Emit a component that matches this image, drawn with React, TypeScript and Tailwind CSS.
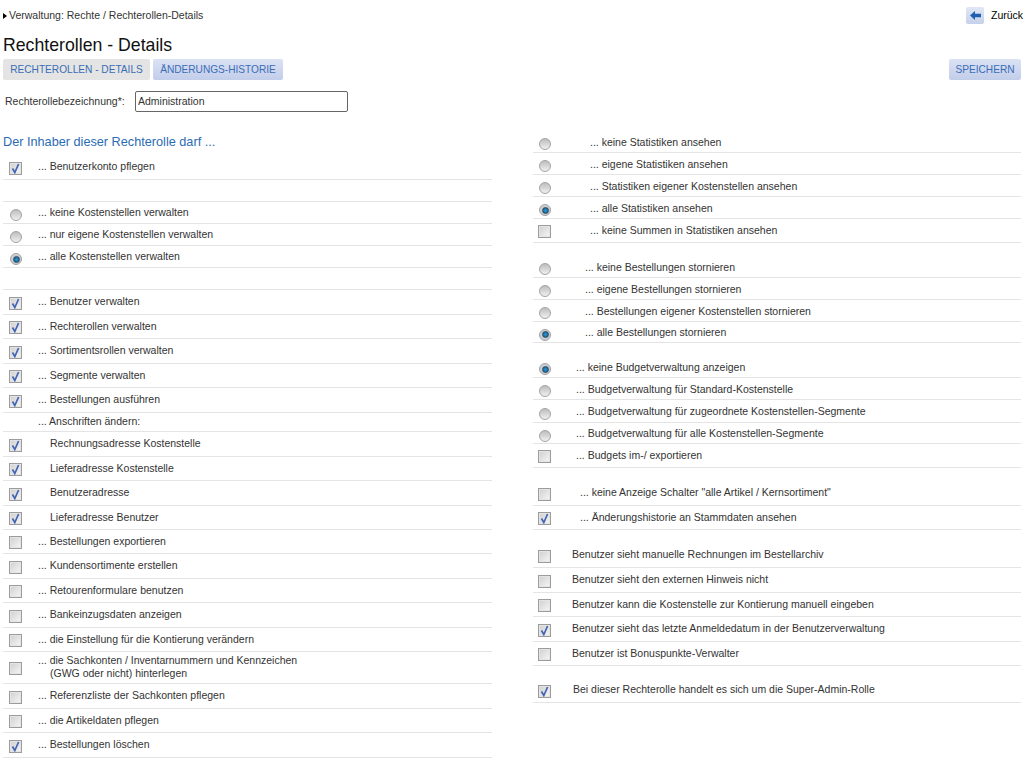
type RowDef = {
  kind: 'check' | 'radio' | 'none' | 'gap';
  label?: React.ReactNode;
  on?: boolean;
  h: number;
  indent?: number;
};

const leftRows: RowDef[] = [
  { kind: 'check', label: '... Benutzerkonto pflegen', on: true, h: 25 },
  { kind: 'none', h: 22 },
  { kind: 'radio', label: '... keine Kostenstellen verwalten', h: 22 },
  { kind: 'radio', label: '... nur eigene Kostenstellen verwalten', h: 22 },
  { kind: 'radio', label: '... alle Kostenstellen verwalten', on: true, h: 22 },
  { kind: 'none', h: 22 },
  { kind: 'check', label: '... Benutzer verwalten', on: true, h: 25 },
  { kind: 'check', label: '... Rechterollen verwalten', on: true, h: 24 },
  { kind: 'check', label: '... Sortimentsrollen verwalten', on: true, h: 25 },
  { kind: 'check', label: '... Segmente verwalten', on: true, h: 24 },
  { kind: 'check', label: '... Bestellungen ausführen', on: true, h: 25 },
  { kind: 'none', label: '... Anschriften ändern:', h: 19 },
  { kind: 'check', label: 'Rechnungsadresse Kostenstelle', on: true, h: 25, indent: 47 },
  { kind: 'check', label: 'Lieferadresse Kostenstelle', on: true, h: 24, indent: 47 },
  { kind: 'check', label: 'Benutzeradresse', on: true, h: 25, indent: 47 },
  { kind: 'check', label: 'Lieferadresse Benutzer', on: true, h: 24, indent: 47 },
  { kind: 'check', label: '... Bestellungen exportieren', h: 24 },
  { kind: 'check', label: '... Kundensortimente erstellen', h: 25 },
  { kind: 'check', label: '... Retourenformulare benutzen', h: 24 },
  { kind: 'check', label: '... Bankeinzugsdaten anzeigen', h: 25 },
  { kind: 'check', label: '... die Einstellung für die Kontierung verändern', h: 24 },
  {
    kind: 'check',
    label: (
      <>
        ... die Sachkonten / Inventarnummern und Kennzeichen
        <br />
        <span className="pl-[12px]">(GWG oder nicht) hinterlegen</span>
      </>
    ),
    h: 32,
  },
  { kind: 'check', label: '... Referenzliste der Sachkonten pflegen', h: 25 },
  { kind: 'check', label: '... die Artikeldaten pflegen', h: 24 },
  { kind: 'check', label: '... Bestellungen löschen', on: true, h: 25 },
];

const rightRows: RowDef[] = [
  { kind: 'radio', label: '... keine Statistiken ansehen', h: 22, indent: 57 },
  { kind: 'radio', label: '... eigene Statistiken ansehen', h: 22, indent: 57 },
  { kind: 'radio', label: '... Statistiken eigener Kostenstellen ansehen', h: 22, indent: 57 },
  { kind: 'radio', label: '... alle Statistiken ansehen', on: true, h: 22, indent: 57 },
  { kind: 'check', label: '... keine Summen in Statistiken ansehen', h: 24, indent: 57 },
  { kind: 'gap', h: 13 },
  { kind: 'radio', label: '... keine Bestellungen stornieren', h: 22, indent: 52 },
  { kind: 'radio', label: '... eigene Bestellungen stornieren', h: 22, indent: 52 },
  { kind: 'radio', label: '... Bestellungen eigener Kostenstellen stornieren', h: 22, indent: 52 },
  { kind: 'radio', label: '... alle Bestellungen stornieren', on: true, h: 21, indent: 52 },
  { kind: 'gap', h: 13 },
  { kind: 'radio', label: '... keine Budgetverwaltung anzeigen', on: true, h: 22, indent: 43 },
  { kind: 'radio', label: '... Budgetverwaltung für Standard-Kostenstelle', h: 22, indent: 43 },
  { kind: 'radio', label: '... Budgetverwaltung für zugeordnete Kostenstellen-Segmente', h: 23, indent: 43 },
  { kind: 'radio', label: '... Budgetverwaltung für alle Kostenstellen-Segmente', h: 21, indent: 43 },
  { kind: 'check', label: '... Budgets im-/ exportieren', h: 24, indent: 43 },
  { kind: 'gap', h: 13 },
  { kind: 'check', label: '... keine Anzeige Schalter "alle Artikel / Kernsortiment"', h: 25, indent: 47 },
  { kind: 'check', label: '... Änderungshistorie an Stammdaten ansehen', on: true, h: 24, indent: 47 },
  { kind: 'gap', h: 13 },
  { kind: 'check', label: 'Benutzer sieht manuelle Rechnungen im Bestellarchiv', h: 25, indent: 39 },
  { kind: 'check', label: 'Benutzer sieht den externen Hinweis nicht', h: 25, indent: 39 },
  { kind: 'check', label: 'Benutzer kann die Kostenstelle zur Kontierung manuell eingeben', h: 24, indent: 39 },
  { kind: 'check', label: 'Benutzer sieht das letzte Anmeldedatum in der Benutzerverwaltung', on: true, h: 25, indent: 39 },
  { kind: 'check', label: 'Benutzer ist Bonuspunkte-Verwalter', h: 24, indent: 39 },
  { kind: 'gap', h: 12 },
  { kind: 'check', label: 'Bei dieser Rechterolle handelt es sich um die Super-Admin-Rolle', on: true, h: 25, indent: 40 },
];

function CheckBox({ on }: { on?: boolean }) {
  return (
    <span className="flex h-[13px] w-[13px] shrink-0 items-center justify-center border border-[#9c9c9c] bg-gradient-to-br from-[#cfcfcf] to-[#f7f7f7] shadow-[inset_0_0_0_1px_#e4e4e4]">
      {on && (
        <svg width="11" height="11" viewBox="0 0 11 11" fill="none">
          <path d="M2.5 5.5 L4.8 9.5 L8.6 1" stroke="#4264b4" strokeWidth="1.7" />
        </svg>
      )}
    </span>
  );
}

function Radio({ on }: { on?: boolean }) {
  return (
    <span
      className={`flex h-[12px] w-[12px] shrink-0 items-center justify-center rounded-full border border-[#a3a3a3] ${
        on ? 'bg-[#c9ced4]' : 'bg-gradient-to-b from-[#bdbdbd] to-[#f0f0f0]'
      }`}
    >
      {on && <span className="h-[7px] w-[7px] rounded-full border border-[#3b4a5a] bg-[radial-gradient(circle,#2f9ad6_0%,#0c5f96_80%)]" />}
    </span>
  );
}

function Row({ row, checkPad, radioPad, radioLow }: { row: RowDef; checkPad: number; radioPad: number; radioLow?: boolean }) {
  if (row.kind === 'gap') return <div style={{ height: row.h }} />;
  const low = radioLow && row.kind === 'radio';
  return (
    <div className="relative flex border-b border-[#e4e4e4]" style={{ height: row.h }}>
      {row.kind === 'check' && (
        <div className="flex items-center pt-[2px]" style={{ paddingLeft: checkPad }}>
          <CheckBox on={row.on} />
        </div>
      )}
      {row.kind === 'radio' && (
        <div className="flex items-center pt-[5px]" style={{ paddingLeft: radioPad }}>
          <Radio on={row.on} />
        </div>
      )}
      {row.label && (
        <div
          className={`absolute top-0 flex h-full items-center whitespace-nowrap leading-[13px] ${low ? 'pt-[1px]' : 'pb-[1px]'}`}
          style={{ left: row.indent ?? 35 }}
        >
          <div>{row.label}</div>
        </div>
      )}
    </div>
  );
}

export default function App() {
  return (
    <div className="h-[758px] w-[1024px] overflow-hidden bg-white font-['Liberation_Sans',Arial,sans-serif] text-[10.5px] text-[#333]">
      {/* Kopfzeile */}
      <div className="flex h-[33px] items-start justify-between pl-[3px] pt-[7px]">
        <div className="flex h-[17px] items-center gap-[2px]">
          <span className="h-0 w-0 border-y-[3px] border-l-[4px] border-y-transparent border-l-black" />
          <span>Verwaltung: Rechte / Rechterollen-Details</span>
        </div>
        <div className="flex items-center">
          <span className="flex h-[17px] w-[18px] items-center justify-center rounded-[2px] bg-gradient-to-b from-[#e2e7f4] to-[#c5d0ea]">
            <svg width="11" height="9" viewBox="0 0 11 9">
              <path d="M0 4.5 L5 0 L5 2.8 L11 2.8 L11 6.2 L5 6.2 L5 9 Z" fill="#1f5fb0" />
            </svg>
          </span>
          <span className="ml-[7px] w-[33px] overflow-hidden whitespace-nowrap text-black">Zurück</span>
        </div>
      </div>

      <h1 className="pl-[3px] text-[17.7px] leading-[24px] text-[#111]">Rechterollen - Details</h1>

      <div className="mt-[2px] flex justify-between px-[3px] text-[10.15px]">
        <div className="flex gap-[3px]">
          <span className="flex h-[21px] w-[147px] items-center justify-center rounded-[2px] bg-[#e4e4e4] text-[#3a6db5]">
            RECHTEROLLEN - DETAILS
          </span>
          <span className="flex h-[21px] w-[130px] items-center justify-center rounded-[2px] bg-gradient-to-b from-[#dbe2f4] to-[#c2cdea] text-[#3a6db5]">
            ÄNDERUNGS-HISTORIE
          </span>
        </div>
        <span className="flex h-[21px] w-[72px] items-center justify-center rounded-[2px] bg-gradient-to-b from-[#dbe2f4] to-[#c2cdea] text-[#3a6db5]">
          SPEICHERN
        </span>
      </div>

      <div className="mt-[11px] flex items-center pl-[5px]">
        <label className="w-[130px]">Rechterollebezeichnung*:</label>
        <input
          readOnly
          value="Administration"
          className="h-[21px] w-[213px] rounded-[2px] border border-[#666] px-[2px] pb-[2px] text-[10.5px] text-[#333] outline-none"
        />
      </div>

      <div className="flex">
        <div className="ml-[3px] w-[489px]">
          <h2 className="mt-[21px] h-[22px] text-[12.7px] leading-[18px] text-[#2b6cb5]">Der Inhaber dieser Rechterolle darf ...</h2>
          {leftRows.map((r, i) => (
            <Row key={i} row={r} checkPad={6} radioPad={7} />
          ))}
        </div>
        <div className="ml-[41px] mt-[19px] w-[488px]">
          {rightRows.map((r, i) => (
            <Row key={i} row={r} checkPad={5} radioPad={6} radioLow />
          ))}
        </div>
      </div>
    </div>
  );
}
